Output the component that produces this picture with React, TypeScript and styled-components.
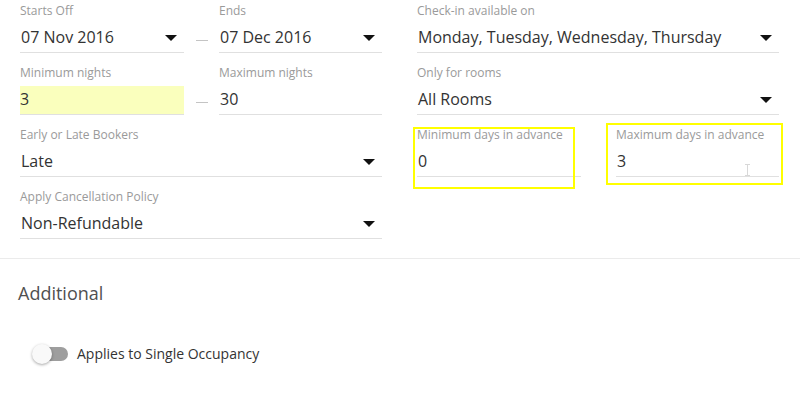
import React from "react";
import styled, { createGlobalStyle, css } from "styled-components";

const GlobalStyle = createGlobalStyle`
  html, body {
    margin: 0;
    padding: 0;
    background: #fff;
    font-family: "Open Sans", "Liberation Sans", Arial, sans-serif;
    color: #333;
  }
`;

const Page = styled.div`
  width: 800px;
  height: 400px;
  overflow: hidden;
`;

const TopSection = styled.div`
  display: grid;
  grid-template-columns: 362px 362px;
  column-gap: 35px;
  padding: 0 21px 10px 20px;
  border-bottom: 1px solid #ebebeb;
`;

const Column = styled.div`
  display: flex;
  flex-direction: column;
`;

const Pair = styled.div`
  display: grid;
  grid-template-columns: 164px 35px 1fr;
  align-items: start;
`;

const Dash = styled.div`
  height: 1px;
  width: 12px;
  margin: 40px auto 0;
  background: #c4c4c4;
`;

const FieldBox = styled.div`
  position: relative;
  height: 62px;
  padding-top: 3px;
  box-sizing: border-box;
`;

const Label = styled.div`
  font-size: 12px;
  line-height: 16px;
  color: #9a9a9a;
  white-space: nowrap;
`;

const Value = styled.div<{ $filled?: boolean }>`
  display: flex;
  align-items: center;
  justify-content: space-between;
  margin-top: 5px;
  height: 29px;
  padding: 0 7px 3px 1px;
  box-sizing: border-box;
  font-size: 16px;
  color: #333;
  border-bottom: 1px solid #e0e0e0;
  ${(p) =>
    p.$filled &&
    css`
      background: #faffbd;
      padding-left: 0;
    `}
`;

const Arrow = styled.span`
  width: 0;
  height: 0;
  margin-top: 3px;
  border-left: 6px solid transparent;
  border-right: 6px solid transparent;
  border-top: 6px solid #111;
`;

const Highlight = styled.div<{ $l: number; $t: number; $w: number; $h: number }>`
  position: absolute;
  left: ${(p) => p.$l}px;
  top: ${(p) => p.$t}px;
  width: ${(p) => p.$w}px;
  height: ${(p) => p.$h}px;
  border: 2px solid #ffff00;
  box-sizing: border-box;
  pointer-events: none;
`;

const Caret = styled.div`
  position: absolute;
  left: 131px;
  top: 40px;
  width: 1px;
  height: 12px;
  background: #d8d8d8;
  &::before,
  &::after {
    content: "";
    position: absolute;
    left: -2px;
    width: 5px;
    height: 1px;
    background: #d8d8d8;
  }
  &::before { top: 0; }
  &::after { bottom: 0; }
`;

const Bottom = styled.div`
  padding: 22px 20px 0 18px;
`;

const Heading = styled.div`
  font-size: 18px;
  line-height: 24px;
  color: #505050;
`;

const ToggleRow = styled.label`
  display: flex;
  align-items: center;
  gap: 9px;
  margin: 39px 0 0 14px;
  font-size: 14px;
  color: #333;
`;

const Switch = styled.span`
  position: relative;
  display: inline-block;
  width: 34px;
  height: 14px;
  margin-left: 2px;
  border-radius: 7px;
  background: #9e9e9e;
  &::after {
    content: "";
    position: absolute;
    left: -2px;
    top: -3px;
    width: 20px;
    height: 20px;
    border-radius: 50%;
    background: #f9f9f9;
    box-shadow: 0 1px 3px rgba(0, 0, 0, 0.35);
  }
`;

type FieldProps = {
  label: string;
  value: string;
  select?: boolean;
  filled?: boolean;
  children?: React.ReactNode;
};

const Field = ({ label, value, select, filled, children }: FieldProps) => (
  <FieldBox>
    <Label>{label}</Label>
    <Value $filled={filled}>
      <span>{value}</span>
      {select && <Arrow />}
    </Value>
    {children}
  </FieldBox>
);

export default function App() {
  return (
    <Page>
      <GlobalStyle />
      <TopSection>
        <Column>
          <Pair>
            <Field label="Starts Off" value="07 Nov 2016" select />
            <Dash />
            <Field label="Ends" value="07 Dec 2016" select />
          </Pair>
          <Pair>
            <Field label="Minimum nights" value="3" filled />
            <Dash />
            <Field label="Maximum nights" value="30" />
          </Pair>
          <Field label="Early or Late Bookers" value="Late" select />
          <Field label="Apply Cancellation Policy" value="Non-Refundable" select />
        </Column>
        <Column>
          <Field label="Check-in available on" value="Monday, Tuesday, Wednesday, Thursday" select />
          <Field label="Only for rooms" value="All Rooms" select />
          <Pair>
            <Field label="Minimum days in advance" value="0">
              <Highlight $l={-4} $t={3} $w={162} $h={62} />
            </Field>
            <div />
            <Field label="Maximum days in advance" value="3">
              <Caret />
              <Highlight $l={-10} $t={-1} $w={177} $h={62} />
            </Field>
          </Pair>
        </Column>
      </TopSection>
      <Bottom>
        <Heading>Additional</Heading>
        <ToggleRow>
          <Switch />
          Applies to Single Occupancy
        </ToggleRow>
      </Bottom>
    </Page>
  );
}
